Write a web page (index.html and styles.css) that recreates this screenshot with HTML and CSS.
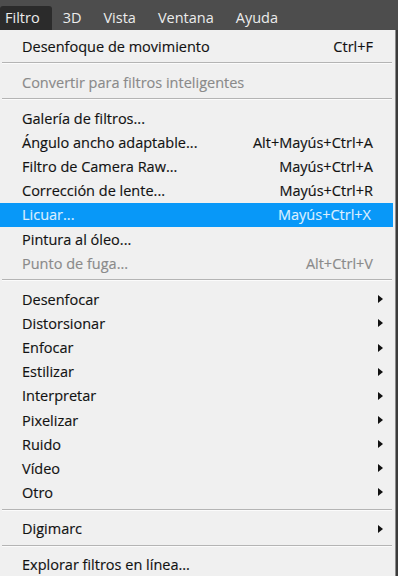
FILE: index.html
```html
<!DOCTYPE html>
<html lang="es">
<head>
  <meta charset="UTF-8" />
  <title>Filtro</title>
  <link rel="stylesheet" href="styles.css">
</head>
<body>
  <header class="menubar">
    <span class="tab open">Filtro</span>
    <span class="tab">3D</span>
    <span class="tab">Vista</span>
    <span class="tab">Ventana</span>
    <span class="tab">Ayuda</span>
  </header>

  <div class="menu">
    <div class="item"><span>Desenfoque de movimiento</span><span class="key">Ctrl+F</span></div>
    <div class="sep"></div>
    <div class="item disabled"><span>Convertir para filtros inteligentes</span></div>
    <div class="sep"></div>
    <div class="item"><span>Galería de filtros...</span></div>
    <div class="item"><span>Ángulo ancho adaptable...</span><span class="key">Alt+Mayús+Ctrl+A</span></div>
    <div class="item"><span>Filtro de Camera Raw...</span><span class="key">Mayús+Ctrl+A</span></div>
    <div class="item"><span>Corrección de lente...</span><span class="key">Mayús+Ctrl+R</span></div>
    <div class="item active"><span>Licuar...</span><span class="key">Mayús+Ctrl+X</span></div>
    <div class="item"><span>Pintura al óleo...</span></div>
    <div class="item disabled"><span>Punto de fuga...</span><span class="key">Alt+Ctrl+V</span></div>
    <div class="sep"></div>
    <div class="item sub"><span>Desenfocar</span></div>
    <div class="item sub"><span>Distorsionar</span></div>
    <div class="item sub"><span>Enfocar</span></div>
    <div class="item sub"><span>Estilizar</span></div>
    <div class="item sub"><span>Interpretar</span></div>
    <div class="item sub"><span>Pixelizar</span></div>
    <div class="item sub"><span>Ruido</span></div>
    <div class="item sub"><span>Vídeo</span></div>
    <div class="item sub"><span>Otro</span></div>
    <div class="sep"></div>
    <div class="item sub"><span>Digimarc</span></div>
    <div class="sep"></div>
    <div class="item"><span>Explorar filtros en línea...</span></div>
  </div>
</body>
</html>
```

FILE: styles.css
```css
* {
  margin: 0;
  padding: 0;
  box-sizing: border-box;
}

body {
  width: 398px;
  height: 576px;
  overflow: hidden;
  background: #3c3c3c;
  font-family: 'Open Sans', 'Noto Sans', sans-serif;
  font-size: 14.5px;
  color: #121212;
}

.menubar {
  height: 30px;
  background: #4d4d4d;
  display: flex;
  align-items: flex-end;
}

.tab {
  height: 24px;
  line-height: 24px;
  padding: 0 11px;
  color: #ececec;
}

.tab.open {
  background: #2b2b2b;
  border-radius: 3px 3px 0 0;
  padding: 0 12px 0 5px;
}

.menu {
  width: 396px;
  height: 546px;
  background: #f0f0f0;
  border-right: 1px solid #8c8c8c;
  padding-top: 4px;
}

.item {
  height: 24.15px;
  display: flex;
  align-items: center;
  justify-content: space-between;
  padding: 0 22px 0 22px;
  position: relative;
  -webkit-text-stroke: 0.15px currentColor;
}

.key {
  text-align: right;
}

.item.disabled {
  color: #8a8a8a;
}

.item.active {
  background: #0898f8;
  color: #dcefff;
  margin-right: 2px;
}

.item.sub::after {
  content: "";
  position: absolute;
  right: 12px;
  top: 8px;
  border-left: 5px solid #111;
  border-top: 4px solid transparent;
  border-bottom: 4px solid transparent;
}

.sep {
  margin: 4px 3px 6px 2px;
  border-top: 1px solid #b4b4b4;
  border-bottom: 1px solid #fbfbfb;
}
```
